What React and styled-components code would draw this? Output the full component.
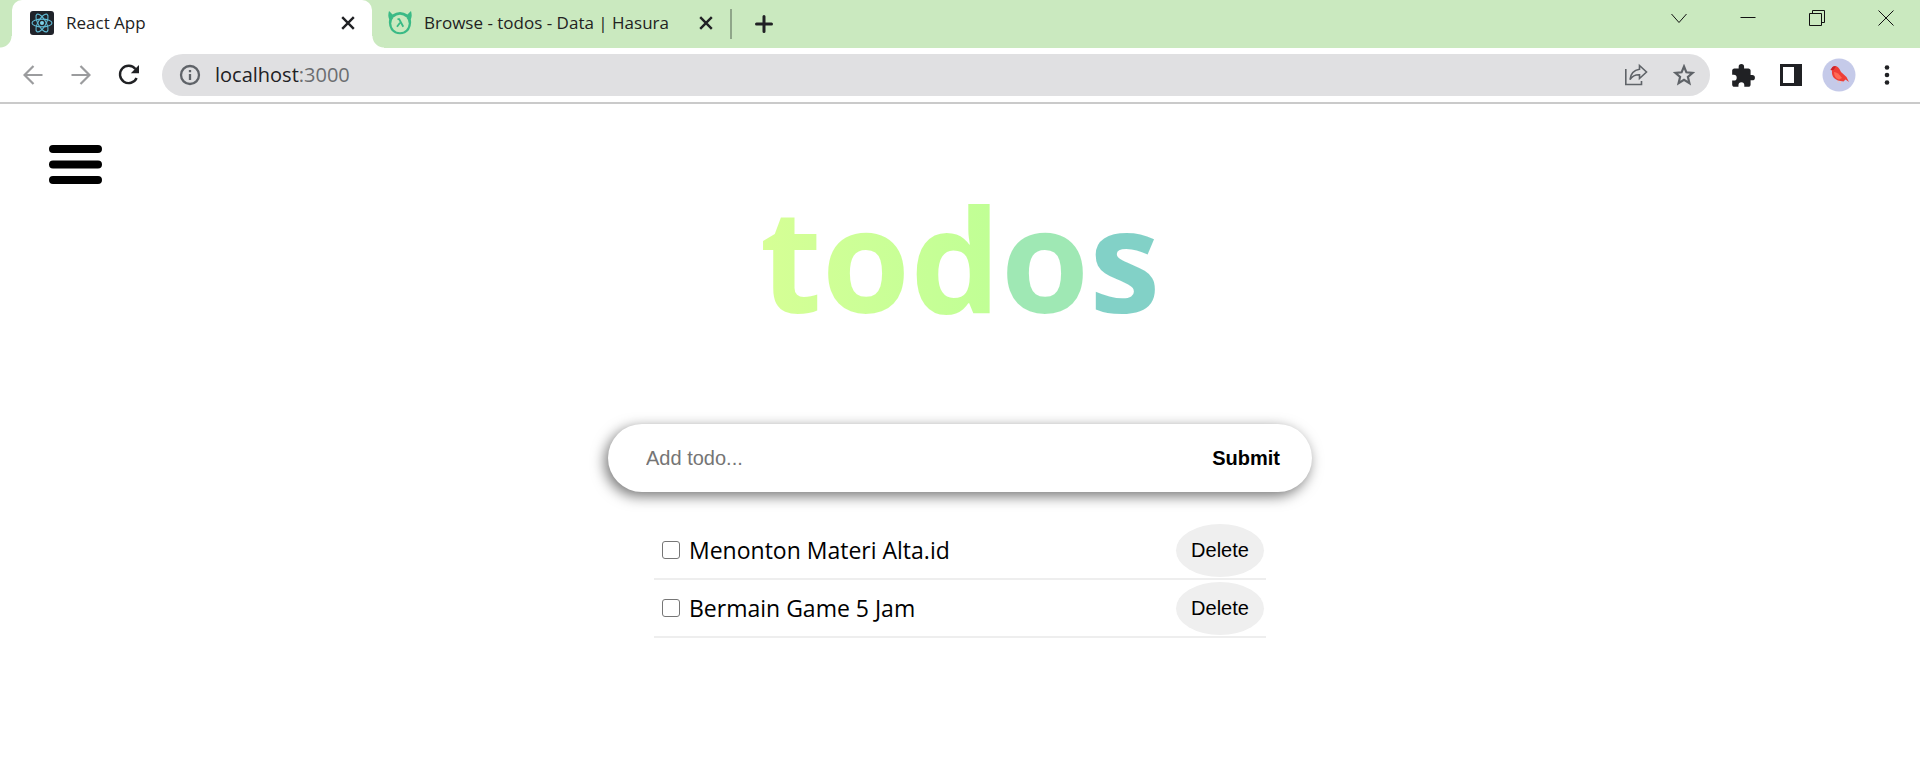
import React, { useState } from "react";
import styled, { createGlobalStyle } from "styled-components";

const GlobalStyle = createGlobalStyle`
  *, *::before, *::after { box-sizing: border-box; }
  body { margin: 0; background: #fff; color: #000; font-family: "Open Sans", "Noto Sans", sans-serif; }
  button, input { font-family: "Liberation Sans", Arial, sans-serif; }
  button { border: 0; padding: 0; color: inherit; cursor: pointer; }
  svg { display: block; flex: none; }
`;

const TabStrip = styled.header`
  display: flex;
  justify-content: space-between;
  height: 48px;
  padding-left: 12px;
  background: #cae9bf;
`;

const Tabs = styled.nav`
  display: flex;
  align-items: center;
`;

const Tab = styled.div`
  position: relative;
  display: flex;
  align-items: center;
  gap: 12px;
  width: ${(p) => p.$width}px;
  height: 48px;
  padding: 0 16px 2px ${(p) => (p.$active ? 18 : 16)}px;
  font-size: 17px;
  line-height: 24px;
  color: #222;
  background: ${(p) => (p.$active ? "#fff" : "transparent")};
  border-radius: 10px 10px 0 0;

  &::before,
  &::after {
    content: "";
    display: ${(p) => (p.$active ? "block" : "none")};
    position: absolute;
    bottom: 0;
    width: 12px;
    height: 12px;
  }
  &::before {
    left: -12px;
    background: radial-gradient(circle at 0 0, transparent 11px, #fff 12px);
  }
  &::after {
    right: -12px;
    background: radial-gradient(circle at 100% 0, transparent 11px, #fff 12px);
  }
`;

const TabTitle = styled.span`
  flex: 1;
  white-space: nowrap;
`;

const IconButton = styled.button`
  display: grid;
  place-items: center;
  width: ${(p) => p.$width || 16}px;
  height: ${(p) => p.$height || 24}px;
  background: none;
`;

const Divider = styled.span`
  width: 2px;
  height: 30px;
  margin-right: 19px;
  background: #8fa689;
`;

const WindowControls = styled.div`
  display: flex;
`;

const Toolbar = styled.div`
  display: flex;
  align-items: center;
  height: 56px;
  padding: 0 9px;
  border-bottom: 2px solid #cacaca;
`;

const AddressBar = styled.div`
  display: flex;
  flex: 1;
  align-items: center;
  height: 42px;
  margin: 0 9px;
  padding: 0 2px 0 17px;
  border-radius: 21px;
  background: #e0e0e2;
`;

const AddressText = styled.div`
  flex: 1;
  margin-left: 14px;
  font-size: 20px;
  line-height: 28px;
  color: #202124;
`;

const Port = styled.span`
  color: #6b6d70;
`;

const MenuButton = styled.button`
  display: block;
  width: 54px;
  height: 40px;
  margin: 40px 0 0 48px;
  background: none;
`;

const Main = styled.main`
  display: flex;
  flex-direction: column;
  align-items: center;
`;

const Title = styled.h1`
  margin: 0;
  font-size: 143px;
  line-height: 148px;
  font-weight: 700;
  color: transparent;
  background: linear-gradient(90deg, #d6ff95 0%, #cbff97 28%, #c0ff95 59%, #9fe8b4 60%, #9fe8b4 82%, #82d1c7 83%, #82d1c7 100%);
  background-clip: text;
  -webkit-background-clip: text;
`;

const AddForm = styled.form`
  display: flex;
  width: 704px;
  max-width: 100%;
  height: 68px;
  margin-top: 92px;
  padding: 0 32px 0 36px;
  border-radius: 34px;
  background: #fff;
  box-shadow: -3px 4px 14px rgba(0, 0, 0, 0.55);
`;

const TodoInput = styled.input`
  flex: 1;
  min-width: 0;
  padding: 0 2px;
  border: 0;
  outline: 0;
  background: none;
  font-size: 20px;
  &::placeholder { color: #757575; }
`;

const SubmitButton = styled.button`
  background: none;
  font-size: 20px;
  font-weight: 700;
`;

const TodoList = styled.ul`
  width: 612px;
  max-width: 100%;
  margin: 30px 0 0;
  padding: 0;
  list-style: none;
`;

const TodoRow = styled.li`
  display: flex;
  align-items: center;
  justify-content: space-between;
  height: 58px;
  padding: 1px 2px 1px 8px;
  border-bottom: 2px solid #eee;
`;

const TodoLabel = styled.label`
  display: flex;
  align-items: center;
  gap: 9px;
  font-size: 23px;
  line-height: 32px;
`;

const Checkbox = styled.input`
  appearance: none;
  width: 18px;
  height: 18px;
  margin: 0;
  border: 1px solid #767676;
  border-radius: 3px;
  background: #fff;
  &:checked { background: #0075ff; border-color: #0075ff; }
`;

const DeleteButton = styled.button`
  width: 88px;
  height: 53px;
  border-radius: 50%;
  background: #efefef;
  font-size: 20px;
`;

const ReactLogo = () => (
  <svg width="24" height="24" viewBox="0 0 24 24">
    <rect width="24" height="24" rx="3" fill="#20232a" />
    <g fill="none" stroke="#61bcd6" strokeWidth="1.1">
      <ellipse cx="12" cy="12" rx="10" ry="3.9" />
      <ellipse cx="12" cy="12" rx="10" ry="3.9" transform="rotate(60 12 12)" />
      <ellipse cx="12" cy="12" rx="10" ry="3.9" transform="rotate(120 12 12)" />
    </g>
    <circle cx="12" cy="12" r="2" fill="#7fd3ea" />
  </svg>
);

const HasuraLogo = () => (
  <svg width="24" height="24" viewBox="0 0 24 24">
    <path d="M1 0Q2.500 1 4.500 3.500Q8 1 12 1Q16 1 19.500 3.500Q21.500 1 23 0Q24.500 5 22.800 8.500Q24 14 21 19A11.500 11.500 0 0 1 3 19Q0 14 1.200 8.500Q-.5 5 1 0Z" fill="#3aba86" />
    <circle cx="12" cy="12.500" r="8.700" fill="#cae9bf" />
    <path d="M9.500 8.200H11.200L15.300 15.800M12 11.700L9 15.800" fill="none" stroke="#3aba86" strokeWidth="1.800" />
  </svg>
);

const CloseIcon = () => (
  <svg width="14" height="14" viewBox="0 0 14 14" fill="none" stroke="#202124" strokeWidth="2.400">
    <path d="M1.200 1.200L12.800 12.800M12.800 1.200L1.200 12.800" />
  </svg>
);

const PlusIcon = () => (
  <svg width="18" height="18" viewBox="0 0 18 18" fill="none" stroke="#202124" strokeWidth="3" strokeLinecap="round">
    <path d="M9 1.500V16.500M1.500 9H16.500" />
  </svg>
);

const BackIcon = () => (
  <svg width="20" height="20" viewBox="0 0 20 20" fill="none" stroke="#9b9c9e" strokeWidth="2.200">
    <path d="M19.500 10H2M10.500 1L1.500 10L10.500 19" />
  </svg>
);

const ForwardIcon = () => (
  <svg width="20" height="20" viewBox="0 0 20 20" fill="none" stroke="#9b9c9e" strokeWidth="2.200">
    <path d="M.5 10H18M9.500 1L18.500 10L9.500 19" />
  </svg>
);

const ReloadIcon = () => (
  <svg width="22" height="22" viewBox="0 0 22 22">
    <path d="M18.600 14A8.700 8.700 0 1 1 17.500 5" fill="none" stroke="#202124" strokeWidth="2.400" />
    <path d="M21 1V9.200H12.800Z" fill="#202124" />
  </svg>
);

const InfoIcon = () => (
  <svg width="22" height="22" viewBox="0 0 22 22" fill="none" stroke="#5f6368" strokeWidth="2.300">
    <circle cx="11" cy="11" r="9" />
    <path d="M11 10V16M11 6V8.300" />
  </svg>
);

const ShareIcon = () => (
  <svg width="24" height="24" viewBox="0 0 24 24" fill="none" stroke="#5f6368" strokeWidth="1.600">
    <path d="M1.800 6V21.500H17.500V18" />
    <path d="M15.500 2.500L22.500 9L15.500 15.500V11.800Q9.500 11.500 6 16.500Q7 7.500 15.500 6.200Z" />
  </svg>
);

const StarIcon = () => (
  <svg width="22" height="22" viewBox="0 0 22 22" fill="none" stroke="#5f6368" strokeWidth="2.200">
    <path d="M11 2.500L13.400 8.300L19.700 8.800L14.900 12.900L16.400 19.100L11 15.800L5.600 19.100L7.100 12.900L2.300 8.800L8.600 8.300Z" />
  </svg>
);

const PuzzleIcon = () => (
  <svg width="26" height="26" viewBox="0 0 24 24" fill="#202124">
    <path d="M20.500 11H19V7c0-1.100-.9-2-2-2h-4V3.500a2.500 2.500 0 0 0-5 0V5H4c-1.100 0-2 .9-2 2v3.800h1.500a2.700 2.700 0 0 1 0 5.400H2V20c0 1.100.9 2 2 2h3.800v-1.500a2.700 2.700 0 0 1 5.400 0V22H17c1.100 0 2-.9 2-2v-4h1.500a2.500 2.500 0 0 0 0-5z" />
  </svg>
);

const SidePanelIcon = () => (
  <svg width="22" height="22" viewBox="0 0 22 22">
    <rect width="22" height="22" fill="#202124" />
    <rect x="3" y="3" width="11" height="16" fill="#fff" />
  </svg>
);

const Avatar = () => (
  <svg width="34" height="34" viewBox="0 0 34 34">
    <circle cx="17" cy="17" r="16.500" fill="#c5cae9" />
    <path d="M8.500 12L10.500 9Q13 7 16 9.200Q18 11 19 14L24.500 19L27 24L23.500 21.500L21.500 23.500Q15 23 12 20Q9.500 17 10 12.500Z" fill="#ef3e36" />
    <path d="M12 14Q16 14 20 20L17 21.500Q12 20 12 14Z" fill="#ff6b55" />
    <path d="M8.500 12L10.500 9Q12 8 14 8.500L11.500 12Z" fill="#c9242d" />
    <path d="M16 23V25M18.500 23.500V25.500" stroke="#f3c2b8" strokeWidth="1" />
  </svg>
);

const MoreIcon = () => (
  <svg width="6" height="20" viewBox="0 0 6 20" fill="#202124">
    <circle cx="3" cy="2.500" r="2.300" />
    <circle cx="3" cy="10" r="2.300" />
    <circle cx="3" cy="17.500" r="2.300" />
  </svg>
);

const windowIcons = [
  { name: "Search tabs", path: "M.5 4L8 12.500L15.500 4" },
  { name: "Minimize", path: "M.5 7.500H15.500" },
  { name: "Restore", path: "M.5 3.500H12.500V15.500H.5ZM3.500 3.500V.5H15.500V12.500H12.500" },
  { name: "Close window", path: "M.5 .5L15.500 15.500M15.500 .5L.5 15.500" },
];

const initialTodos = [
  { id: 1, text: "Menonton Materi Alta.id" },
  { id: 2, text: "Bermain Game 5 Jam" },
];

export default function App() {
  const [todos, setTodos] = useState(initialTodos);
  const [draft, setDraft] = useState("");

  const addTodo = (event) => {
    event.preventDefault();
    if (!draft.trim()) return;
    setTodos([...todos, { id: Date.now(), text: draft }]);
    setDraft("");
  };

  return (
    <>
      <GlobalStyle />
      <TabStrip>
        <Tabs aria-label="Tabs">
          <Tab $active $width={360}>
            <ReactLogo />
            <TabTitle>React App</TabTitle>
            <IconButton aria-label="Close React App"><CloseIcon /></IconButton>
          </Tab>
          <Tab $width={358}>
            <HasuraLogo />
            <TabTitle>Browse - todos - Data | Hasura</TabTitle>
            <IconButton aria-label="Close Hasura"><CloseIcon /></IconButton>
          </Tab>
          <Divider />
          <IconButton $width={26} aria-label="New tab"><PlusIcon /></IconButton>
        </Tabs>
        <WindowControls>
          {windowIcons.map((icon) => (
            <IconButton key={icon.name} $width={69} $height={36} aria-label={icon.name}>
              <svg width="16" height="16" viewBox="0 0 16 16" fill="none" stroke="#111">
                <path d={icon.path} />
              </svg>
            </IconButton>
          ))}
        </WindowControls>
      </TabStrip>
      <Toolbar>
        <IconButton $width={48} aria-label="Back"><BackIcon /></IconButton>
        <IconButton $width={48} aria-label="Forward"><ForwardIcon /></IconButton>
        <IconButton $width={48} aria-label="Reload"><ReloadIcon /></IconButton>
        <AddressBar>
          <InfoIcon />
          <AddressText>localhost<Port>:3000</Port></AddressText>
          <IconButton $width={48} aria-label="Share"><ShareIcon /></IconButton>
          <IconButton $width={48} aria-label="Bookmark"><StarIcon /></IconButton>
        </AddressBar>
        <IconButton $width={48} aria-label="Extensions"><PuzzleIcon /></IconButton>
        <IconButton $width={48} aria-label="Side panel"><SidePanelIcon /></IconButton>
        <IconButton $width={48} $height={34} aria-label="Profile"><Avatar /></IconButton>
        <IconButton $width={48} aria-label="More"><MoreIcon /></IconButton>
      </Toolbar>
      <MenuButton aria-label="Open menu">
        <svg width="54" height="40" viewBox="0 0 54 40" stroke="#000" strokeWidth="8" strokeLinecap="round">
          <path d="M5 5H50M5 20.500H50M5 36H50" />
        </svg>
      </MenuButton>
      <Main>
        <Title>todos</Title>
        <AddForm onSubmit={addTodo}>
          <TodoInput aria-label="Add todo" placeholder="Add todo..." value={draft} onChange={(e) => setDraft(e.target.value)} />
          <SubmitButton type="submit">Submit</SubmitButton>
        </AddForm>
        <TodoList>
          {todos.map((todo) => (
            <TodoRow key={todo.id}>
              <TodoLabel>
                <Checkbox type="checkbox" />
                {todo.text}
              </TodoLabel>
              <DeleteButton type="button" onClick={() => setTodos(todos.filter((t) => t.id !== todo.id))}>
                Delete
              </DeleteButton>
            </TodoRow>
          ))}
        </TodoList>
      </Main>
    </>
  );
}
